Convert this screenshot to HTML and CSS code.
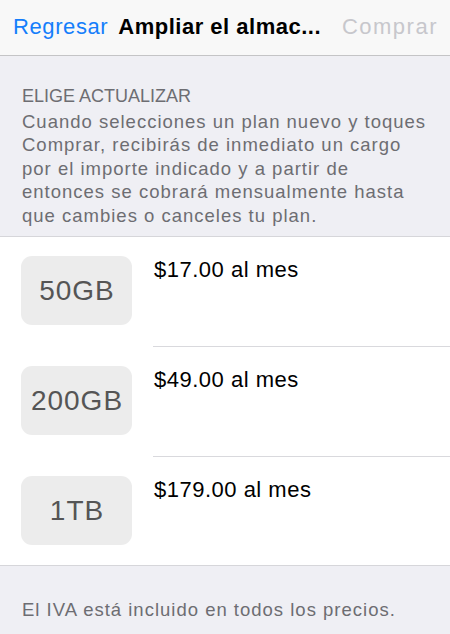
FILE: index.html
```html
<!DOCTYPE html>
<html>

<head>
  <meta charset="utf-8">
  <title>Ampliar el almacenamiento</title>
  <meta name="viewport" content="width=device-width, initial-scale=1">
  <link rel="stylesheet" href="styles.css">
</head>

<body>
  <div class="navbar">
    <span class="nav-back">Regresar</span>
    <span class="nav-title">Ampliar el almac...</span>
    <span class="nav-action">Comprar</span>
  </div>

  <div class="intro">
    <div class="intro-title">ELIGE ACTUALIZAR</div>
    <p class="intro-text">Cuando selecciones un plan nuevo y toques Comprar, recibirás de inmediato un cargo por el importe indicado y a partir de entonces se cobrará mensualmente hasta que cambies o canceles tu plan.</p>
  </div>

  <div class="plans">
    <div class="plan">
      <div class="plan-size">50GB</div>
      <div class="plan-info">$17.00 al mes</div>
    </div>
    <div class="plan">
      <div class="plan-size">200GB</div>
      <div class="plan-info">$49.00 al mes</div>
    </div>
    <div class="plan">
      <div class="plan-size">1TB</div>
      <div class="plan-info">$179.00 al mes</div>
    </div>
  </div>

  <div class="footer">El IVA está incluido en todos los precios.</div>
</body>

</html>
```

FILE: styles.css
```css
* {
  padding: 0px;
  margin: 0px;
  box-sizing: border-box;
}

body {
  width: 450px;
  height: 634px;
  background-color: #efeff4;
  font-family: "Liberation Sans", Arial, sans-serif;
  overflow: hidden;
}

.navbar {
  height: 56px;
  background-color: #f8f8f8;
  border-bottom: 1px solid #c4c4c6;
  display: flex;
  align-items: center;
  padding: 0 13px 2px 13px;
  font-size: 22px;
}

.nav-back {
  color: #157efb;
  letter-spacing: 0.6px;
}

.nav-title {
  font-weight: bold;
  color: #000;
  margin-left: 10px;
  letter-spacing: 0.5px;
}

.nav-action {
  color: #c7c7cc;
  margin-left: auto;
  letter-spacing: 1.5px;
  margin-right: -1px;
}

.intro {
  height: 181px;
  padding: 30px 20px 0 22px;
  border-bottom: 1px solid #d6d6da;
  color: #6d6d72;
}

.intro-title {
  font-size: 18px;
  line-height: 20px;
  margin-bottom: 4px;
}

.intro-text {
  font-size: 18.5px;
  line-height: 23.4px;
  letter-spacing: 1px;
}

.plans {
  background-color: #fff;
}

.plan {
  height: 110px;
  display: flex;
  padding-left: 21px;
}

.plan:last-child {
  height: 108px;
}

.plan-size {
  width: 111px;
  height: 69px;
  margin-top: 19px;
  border-radius: 11px;
  background-color: #ececec;
  color: #555;
  font-size: 28px;
  letter-spacing: 1px;
  padding-left: 1px;
  display: flex;
  align-items: center;
  justify-content: center;
}

.plan-info {
  flex: 1;
  margin-left: 21px;
  padding: 22px 0 0 1px;
  border-bottom: 1px solid #d9d9dd;
  font-size: 22px;
  line-height: 21px;
  letter-spacing: 0.5px;
  color: #000;
}

.plan:last-child .plan-info {
  border-bottom: none;
}

.footer {
  border-top: 1px solid #d6d6da;
  padding: 33px 21px 0 22px;
  font-size: 18.5px;
  letter-spacing: 1px;
  color: #6d6d72;
}
```
